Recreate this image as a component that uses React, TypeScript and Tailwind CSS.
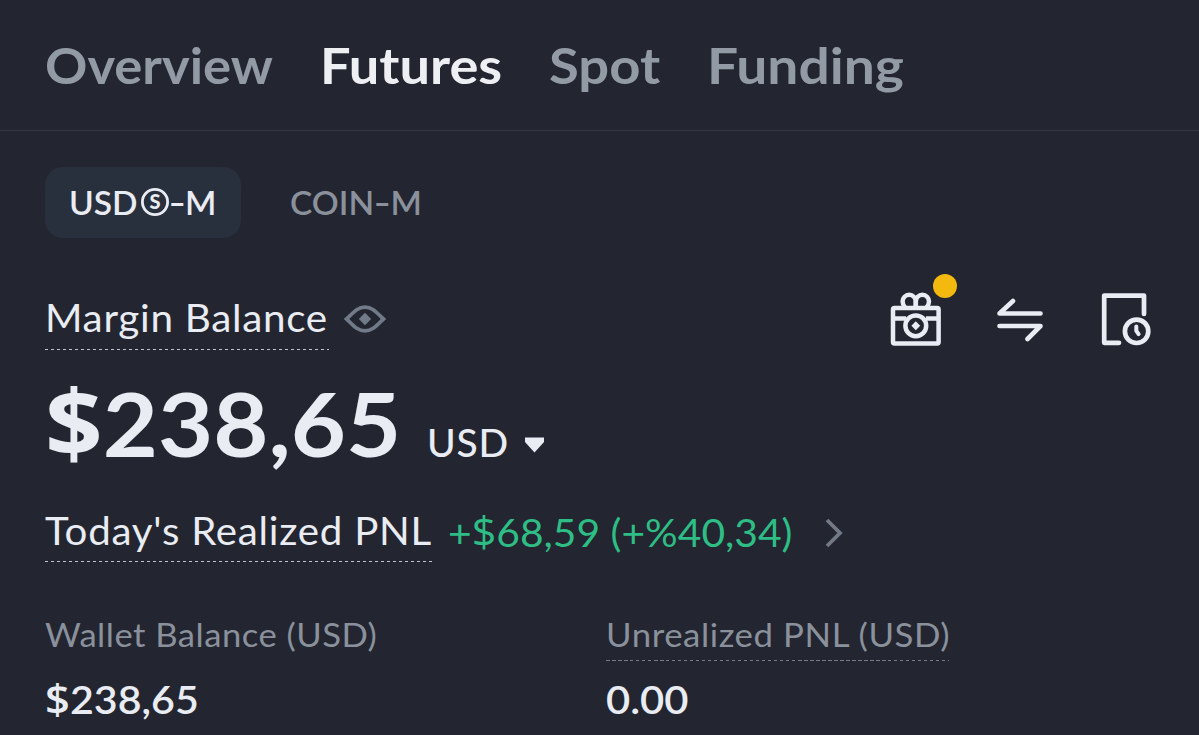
import type { ReactNode } from "react";
import clsx from "clsx";

interface DashedLabelProps {
  children: ReactNode;
  className?: string;
  textClassName?: string;
}

const tabs = [
  { label: "Overview", className: "w-[227px] mr-[48px]", textClassName: "scale-x-[1.072]" },
  { label: "Futures", className: "w-[180px] mr-[49px]", textClassName: "scale-x-[1.105]", active: true },
  { label: "Spot", className: "w-[110px] mr-[48px]", textClassName: "scale-x-[1.11]" },
  { label: "Funding", className: "w-[197px]", textClassName: "scale-x-[1.125]" },
];

function DashedLabel({ children, className, textClassName }: DashedLabelProps) {
  return (
    <div className={clsx("flex flex-col justify-between", className)}>
      <span className={clsx("block origin-left", textClassName)}>{children}</span>
      <div className="h-[1.5px] bg-[repeating-linear-gradient(90deg,currentColor_0_3.5px,transparent_3.5px_6px)] opacity-80" />
    </div>
  );
}

// Upright dollar sign in front of an amount
function Amount({ value }: { value: string }) {
  return (
    <>
      <span className="font-['Open_Sans',sans-serif] text-[1.06em] leading-[0.8]">$</span>
      {value}
    </>
  );
}

// Wide hyphen raised to the middle of the capitals
function CapHyphen() {
  return <span className="mx-[2px] inline-block -translate-y-px scale-x-140">-</span>;
}

function EyeIcon() {
  return (
    <svg width="42" height="30" viewBox="0 0 42 30" fill="none" className="text-[#717a88]">
      <path
        d="M2.6 15 C9 9 13 3.2 21 3.2 C29 3.2 33 9 39.4 15 C33 21 29 26.8 21 26.8 C13 26.8 9 21 2.6 15Z"
        stroke="currentColor"
        strokeWidth="3.8"
        strokeLinejoin="miter"
      />
      <path d="M21 8.8 27.2 15 21 21.2 14.8 15Z" fill="currentColor" />
    </svg>
  );
}

function GiftIcon() {
  return (
    <svg width="52" height="54" viewBox="0 0 52 54" fill="none" stroke="currentColor" strokeWidth="4.5">
      <rect x="3" y="16" width="45.6" height="35.4" rx="1.5" />
      <path d="M25.8 15V9.4a6.6 6.6 0 1 0-13.2 0c0 2.3 1 4.2 2.4 5.6" />
      <path d="M25.8 15V9.4a6.6 6.6 0 1 1 13.2 0c0 2.3-1 4.2-2.4 5.6" />
      <path d="M3 26.6h13M36 26.6h12" />
      <circle cx="25.8" cy="33.8" r="10.4" />
      <path d="M25.8 29.3 30.2 33.8 25.8 38.2 21.4 33.8Z" fill="currentColor" stroke="none" />
    </svg>
  );
}

function TransferIcon() {
  return (
    <svg
      width="48"
      height="46"
      viewBox="0 0 48 46"
      fill="none"
      stroke="currentColor"
      strokeWidth="4.6"
      strokeLinecap="round"
      strokeLinejoin="round"
    >
      <path d="M44.5 16.5H3.5L17 4" />
      <path d="M3.5 29H44.5L31.5 42" />
    </svg>
  );
}

function HistoryIcon() {
  return (
    <svg
      width="50"
      height="54"
      viewBox="0 0 50 54"
      fill="none"
      stroke="currentColor"
      strokeWidth="4.7"
      strokeLinecap="round"
      strokeLinejoin="round"
    >
      <path d="M18 50.8H3.2V3.6H43V22" />
      <circle cx="35.6" cy="39.3" r="11.7" />
      <path d="M35.3 34.5V38.8L37.6 42.2" strokeWidth="4" />
    </svg>
  );
}

export default function App() {
  return (
    <div className="flex h-[735px] w-[1199px] flex-col overflow-hidden bg-[#232630] font-['Lato',sans-serif] whitespace-nowrap text-[#eaecf3]">
      {/* Account tabs */}
      <nav className="flex h-[131px] shrink-0 border-b border-[#343944] pt-[35px] pl-[45px] text-[49px] leading-[60px] font-bold text-[#929aa5]">
        {tabs.map((tab) => (
          <button
            key={tab.label}
            className={clsx("h-[60px] text-left", tab.className, tab.active && "text-[#eeeff3]")}
          >
            <span className={clsx("block origin-left", tab.textClassName)}>{tab.label}</span>
          </button>
        ))}
      </nav>

      <main className="flex flex-col pt-9 pr-12 pl-[45px]">
        {/* Contract type */}
        <div className="flex h-[71px] items-center text-[33.5px] leading-10 font-semibold">
          <button className="mr-[49px] flex h-full w-[196px] items-center rounded-[18px] bg-[#29303d] pb-0.5 pl-6">
            <span className="mr-[3px]">USD</span>
            <svg width="28" height="28" viewBox="0 0 28 28">
              <circle cx="14" cy="14" r="12.6" fill="none" stroke="currentColor" strokeWidth="2.8" />
              <text x="14" y="20.8" textAnchor="middle" fill="currentColor" fontSize="20" fontWeight="900">
                S
              </text>
            </svg>
            <span>
              <CapHyphen />M
            </span>
          </button>
          <button className="pb-0.5 text-[#8a919c]">
            <span>
              COIN
              <CapHyphen />M
            </span>
          </button>
        </div>

        {/* Margin balance and shortcuts */}
        <div className="mt-[35px] flex h-[77px] items-start">
          <DashedLabel
            className="mt-[21px] h-[56px] w-[284px] text-[38.5px] leading-[46px] tracking-[0.65px]"
            textClassName="scale-x-[1.05]"
          >
            Margin Balance
          </DashedLabel>
          <div className="mt-[31px] ml-[15px]">
            <EyeIcon />
          </div>
          <div className="ml-auto flex items-start">
            <div className="relative mt-[19px] mr-[54px]">
              <GiftIcon />
              <span className="absolute -top-[18px] left-[43px] size-6 rounded-full bg-[#f3b90f]" />
            </div>
            <div className="mt-[24px] mr-[57px]">
              <TransferIcon />
            </div>
            <div className="mt-[19px]">
              <HistoryIcon />
            </div>
          </div>
        </div>

        <div className="mt-[29px] flex h-[88px] items-baseline">
          <span className="block w-[382px] origin-left scale-x-[1.082] text-[88px] leading-[88px] font-bold">
            <Amount value="238,65" />
          </span>
          <span className="w-[98px] text-[39px] leading-[46px] font-medium tracking-[0.8px]">USD</span>
          <svg width="20" height="28" viewBox="0 0 20 28">
            <path d="M0 8.5H19V13L9.5 23.5 0 13Z" fill="currentColor" />
          </svg>
        </div>

        {/* Realized PNL */}
        <div className="mt-[41px] flex h-[54px] items-start">
          <DashedLabel
            className="h-[54px] w-[388px] text-[38px] leading-[44px] tracking-[0.7px]"
            textClassName="scale-x-[1.06]"
          >
            Today's Realized PNL
          </DashedLabel>
          <div className="mt-[2px] ml-[15px] w-[377px] text-[39px] leading-[44px] text-[#2ebd85]">
            <span className="inline-block origin-left scale-x-[1.045]">
              +<Amount value="68,59 (+%40,34)" />
            </span>
          </div>
          <svg width="20" height="32" viewBox="0 0 20 32" className="mt-[9px] text-[#717887]">
            <path d="M2 3 15 16 2 29" fill="none" stroke="currentColor" strokeWidth="3.8" />
          </svg>
        </div>

        {/* Balances */}
        <div className="mt-[52px] grid grid-cols-[561px_1fr]">
          <div>
            <div className="h-[47px] text-[33px] leading-10 tracking-[0.45px] text-[#8a919c]">
              <span className="inline-block origin-left scale-x-[1.05]">Wallet Balance (USD)</span>
            </div>
            <div className="mt-[15px] text-[39px] leading-[46px] font-semibold">
              <span className="inline-block origin-left scale-x-[1.055]">
                <Amount value="238,65" />
              </span>
            </div>
          </div>
          <div>
            <DashedLabel
              className="h-[47px] w-[343px] text-[33px] leading-10 tracking-[0.53px] text-[#8a919c]"
              textClassName="scale-x-[1.055]"
            >
              Unrealized PNL (USD)
            </DashedLabel>
            <div className="mt-[15px] text-[39px] leading-[46px] font-semibold">
              <span className="inline-block origin-left scale-x-[1.07]">0.00</span>
            </div>
          </div>
        </div>
      </main>
    </div>
  );
}
